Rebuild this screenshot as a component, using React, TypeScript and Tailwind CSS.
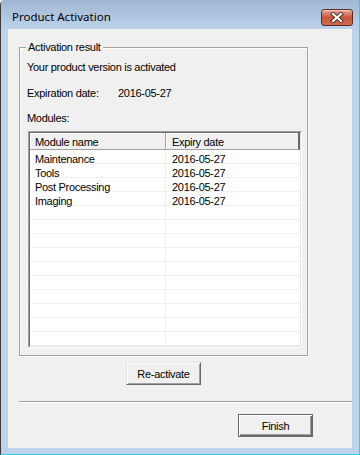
const modules = [
  { name: 'Maintenance', expiry: '2016-05-27' },
  { name: 'Tools', expiry: '2016-05-27' },
  { name: 'Post Processing', expiry: '2016-05-27' },
  { name: 'Imaging', expiry: '2016-05-27' },
]

// the list view keeps drawing empty grid rows down to its bottom edge
const rows = [
  ...modules,
  ...Array.from({ length: 10 }, () => ({ name: '', expiry: '' })),
]

function CloseButton() {
  return (
    <div className="flex h-[17px] w-[32px] items-center justify-center rounded-[3px] border border-[#5b2a22] bg-gradient-to-b from-[#e9a899] via-[#c8553c] to-[#d06a4f] shadow-[inset_0_1px_0_rgba(255,255,255,0.45)]">
      <svg width="14" height="11" viewBox="0 0 14 11">
        <path d="M3 2 L11 9 M11 2 L3 9" stroke="#4b2d28" strokeWidth="4" strokeLinecap="square" />
        <path d="M3 2 L11 9 M11 2 L3 9" stroke="#fff" strokeWidth="2.2" strokeLinecap="square" />
      </svg>
    </div>
  )
}

export default function App() {
  return (
    <div className="flex h-[455px] w-[360px] flex-col overflow-hidden rounded-tl-[5px] border-b border-l border-r border-b-[#2ccfe8] border-l-[#3a3a3a] border-r-[#2ccfe8] bg-[#bed3ea] font-['Liberation_Sans',Arial,sans-serif] text-[11px] tracking-[-0.3px] text-black">
      <div className="flex h-[29px] items-start justify-between bg-gradient-to-b from-[#a0b7d3] to-[#bdd2ea] pr-[6px] pl-[11px] pt-[9px]">
        <span className="font-['Noto_Sans',sans-serif] text-[11.5px] leading-[16px] tracking-normal text-black">
          Product Activation
        </span>
        <CloseButton />
      </div>

      <div className="mx-[7px] flex h-[419px] flex-col bg-[#f0f0f0] pl-[11px] pt-[18px]">
        <div className="relative flex h-[309px] w-[289px] flex-col border border-[#a0a0a0] px-[7px] pt-[12px] leading-[14px] shadow-[inset_1px_1px_0_#fff,1px_1px_0_#fff]">
          <span className="absolute top-[-8px] left-[6px] bg-[#f0f0f0] px-[2px] leading-[14px]">
            Activation result
          </span>

          <div>Your product version is activated</div>
          <div className="mt-[12px] flex">
            <span className="w-[91px]">Expiration date:</span>
            <span>2016-05-27</span>
          </div>
          <div className="mt-[11px]">Modules:</div>

          <div className="mt-[6px] ml-[1px] w-[274px] border border-t-[#a0a0a0] border-r-white border-b-white border-l-[#a0a0a0]">
            <div className="border border-t-[#696969] border-r-[#e3e3e3] border-b-[#e3e3e3] border-l-[#696969] bg-white">
              <div className="flex h-[17px] bg-[#f0f0f0]">
                <div className="flex w-[136px] items-center border-r border-b border-r-[#a0a0a0] border-b-[#a0a0a0] pl-[5px] pt-[1px] shadow-[inset_1px_1px_0_#fff]">
                  Module name
                </div>
                <div className="flex flex-1 items-center border-r-2 border-b border-r-[#696969] border-b-[#a0a0a0] pl-[6px] pt-[1px] shadow-[inset_1px_1px_0_#fff]">
                  Expiry date
                </div>
              </div>
              {rows.map((row, i) => (
                <div key={i} className="flex h-[14px]">
                  <div className="w-[136px] border-r border-b border-[#f0f0f0] pl-[5px] leading-[18px]">
                    {row.name}
                  </div>
                  <div className="flex-1 border-b border-[#f0f0f0] pl-[6px] leading-[18px]">
                    {row.expiry}
                  </div>
                </div>
              ))}
            </div>
          </div>
        </div>

        <div className="mt-[6px] flex w-[289px] justify-center">
          <button className="h-[23px] w-[75px] border border-t-[#e3e3e3] border-r-[#696969] border-b-[#696969] border-l-[#e3e3e3] bg-[#f0f0f0] leading-[14px] shadow-[inset_1px_1px_0_#fff,inset_-1px_-1px_0_#a0a0a0]">
            Re-activate
          </button>
        </div>

        <div className="mt-[16px] w-[333px] border-t border-b border-t-[#a0a0a0] border-b-white" />

        <div className="mt-[11px] flex">
          <button className="ml-[219px] h-[23px] w-[75px] border border-[#696969] bg-[#f0f0f0] leading-[14px] shadow-[inset_1px_1px_0_#fff,inset_-1px_-1px_0_#696969,inset_-2px_-2px_0_#a0a0a0]">
            Finish
          </button>
        </div>
      </div>
    </div>
  )
}
